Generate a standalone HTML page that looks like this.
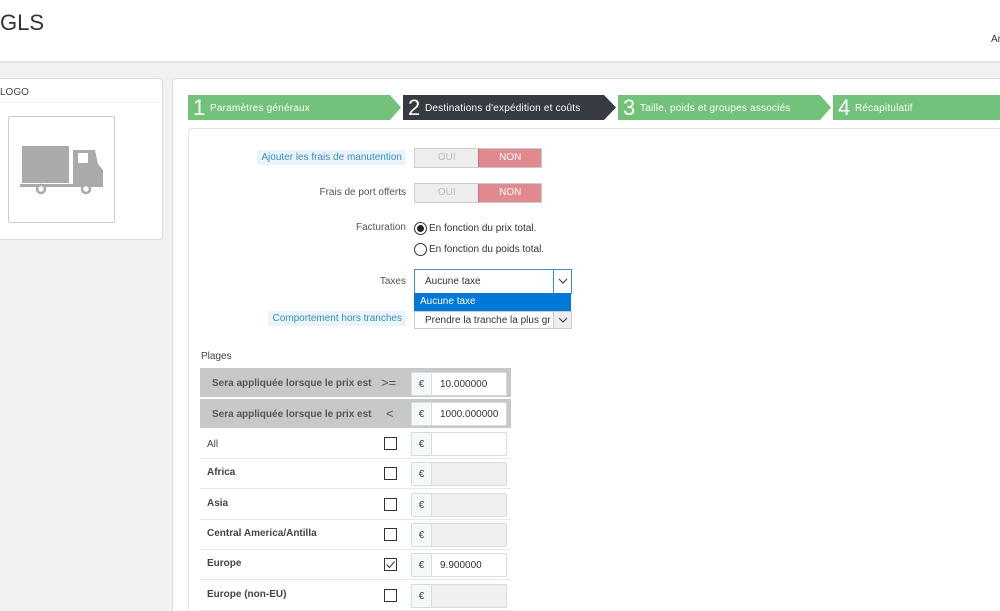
<!DOCTYPE html>
<html><head><meta charset="utf-8"><style>
*{box-sizing:border-box;margin:0;padding:0}
html,body{width:1000px;height:611px;overflow:hidden}
body{background:#eff1f2;font-family:"Liberation Sans",sans-serif;font-size:10px;color:#555;position:relative}
.a{position:absolute}
.hdr{left:0;top:0;width:1000px;height:63px;background:#fff;border-bottom:2px solid #dfe2e4}
.panel{background:#fff;border:1px solid #dcdfe1;border-radius:4px}
.step{height:25px;color:#fff;font-size:10px;line-height:25px;white-space:nowrap}
.step b{font-weight:normal;font-size:22px;position:absolute;left:5px;top:0px;line-height:25px}
.step span{position:absolute;left:22px;top:1px;letter-spacing:0.2px}
.lbl{text-align:right;font-size:10px;color:#555;line-height:18px}
.hl{background:#eaf4fb;color:#3a8bbb;padding:2px 4px;border-radius:2px}
.sw{height:20px;width:128px;border:1px solid #ccc;display:flex;font-size:10px;line-height:18px;text-align:center}
.sw .o{width:64px;background:#eee;color:#bbb}
.sw .n{width:63px;background:#e08a8f;color:#fff;border-left:1px solid #c97378}
.radio{width:13px;height:13px;border:1px solid #333;border-radius:50%}
.sel{background:#fff;border:1px solid #ccc;font-size:10px;color:#333;line-height:24px;padding-left:10px}
.caret{position:absolute;right:0;top:0;width:18px;height:100%;border-left:1px solid #ccc}
.tr{left:200px;width:311px;height:30px;border-bottom:1px solid #e8e8e8;font-size:10px;color:#444;font-weight:bold}
.tr .n{position:absolute;left:7px;top:10px}
.cb{position:absolute;left:184px;top:8px;width:13px;height:13px;border:1px solid #333;background:#fff}
.ig{position:absolute;left:211px;top:3px;width:96px;height:24px;border:1px solid #d5dde0;border-radius:2px;display:flex;background:#f0f0f0}
.ig .e{width:20px;background:#f5f8f9;border-right:1px solid #d5dde0;text-align:center;line-height:24px;font-weight:normal;color:#444}
.ig .v{flex:1;padding-left:8px;line-height:24px;font-weight:normal;color:#333}
.gh{left:200px;width:311px;height:29px;background:#c8c8c8;font-weight:bold;color:#555;font-size:10px}
</style></head><body>
<div class="a hdr"></div>
<div class="a" style="left:0;top:10px;font-size:22px;color:#333">GLS</div>
<div class="a" style="left:991px;top:34px;font-size:10px;color:#333">An</div>

<div class="a panel" style="left:-5px;top:78px;width:168px;height:162px"></div>
<div class="a" style="left:0;top:87px;font-size:10px;color:#444">LOGO</div>
<div class="a" style="left:0;top:102px;width:160px;height:1px;background:#eee"></div>
<div class="a" style="left:8px;top:116px;width:107px;height:107px;border:1px solid #ccc;border-radius:2px;background:#fff">
<svg width="107" height="107" viewBox="0 0 107 107" style="position:absolute;left:-1px;top:-1px">
<rect x="14" y="30" width="47" height="37" fill="#aaa"/>
<path d="M65 34h22l3 14 5 6v14h-30z" fill="#aaa"/>
<rect x="70" y="37" width="10" height="10" rx="1" fill="#fff"/>
<rect x="12" y="68" width="83" height="3" fill="#aaa"/>
<circle cx="33" cy="73" r="4" fill="#fff" stroke="#aaa" stroke-width="2.5"/>
<circle cx="78" cy="73" r="4" fill="#fff" stroke="#aaa" stroke-width="2.5"/>
</svg></div>

<div class="a panel" style="left:172px;top:78px;width:840px;height:545px"></div>

<svg class="a" style="left:188px;top:95px" width="812" height="25">
<polygon points="0,0 202,0 213,12.5 202,25 0,25" fill="#72c279"/>
<polygon points="215,0 416,0 428,12.5 416,25 215,25" fill="#363a41"/>
<polygon points="430,0 632,0 643,12.5 632,25 430,25" fill="#72c279"/>
<polygon points="645,0 812,0 812,25 645,25" fill="#72c279"/>
</svg>
<div class="a step" style="left:188px;top:95px"><b>1</b><span>Paramètres généraux</span></div>
<div class="a step" style="left:403px;top:95px"><b>2</b><span>Destinations d'expédition et coûts</span></div>
<div class="a step" style="left:618px;top:95px"><b>3</b><span>Taille, poids et groupes associés</span></div>
<div class="a step" style="left:833px;top:95px"><b>4</b><span>Récapitulatif</span></div>

<div class="a" style="left:188px;top:128px;width:830px;height:500px;border:1px solid #e2e2e2;border-radius:4px;background:#fff"></div>

<div class="a lbl" style="left:200px;top:149px;width:206px"><span class="hl">Ajouter les frais de manutention</span></div>
<div class="a sw" style="left:414px;top:148px"><div class="o">OUI</div><div class="n">NON</div></div>
<div class="a lbl" style="left:200px;top:184px;width:206px">Frais de port offerts</div>
<div class="a sw" style="left:414px;top:183px"><div class="o">OUI</div><div class="n">NON</div></div>

<div class="a lbl" style="left:200px;top:219px;width:206px">Facturation</div>
<div class="a radio" style="left:414px;top:222px"><div style="margin:2px;width:7px;height:7px;border-radius:50%;background:#222"></div></div>
<div class="a" style="left:429px;top:223px;color:#333">En fonction du prix total.</div>
<div class="a radio" style="left:414px;top:243px"></div>
<div class="a" style="left:429px;top:244px;color:#333">En fonction du poids total.</div>

<div class="a lbl" style="left:200px;top:273px;width:206px">Taxes</div>
<div class="a sel" style="left:414px;top:269px;width:158px;height:25px;border-color:#3a8bd0">Aucune taxe<div class="caret" style="border-color:#3a8bd0"><svg width="18" height="22"><path d="M5 9l4 4 4-4" stroke="#333" fill="none"/></svg></div></div>
<div class="a" style="left:414px;top:293px;width:157px;height:18px;background:#0078d7;color:#fff;line-height:18px;padding-left:6px">Aucune taxe</div>
<div class="a lbl" style="left:200px;top:310px;width:206px"><span class="hl">Comportement hors tranches</span></div>
<div class="a sel" style="left:414px;top:311px;width:158px;height:18px;line-height:18px;overflow:hidden;white-space:nowrap">Prendre la tranche la plus gr<div class="caret" style="background:#eee"><svg width="18" height="16"><path d="M5 6l4 4 4-4" stroke="#333" fill="none"/></svg></div></div>

<div class="a" style="left:201px;top:351px;color:#444">Plages</div>
<div class="a gh" style="top:368px"><span class="a" style="left:12px;top:10px">Sera appliquée lorsque le prix est</span><span class="a" style="left:181px;top:7px;font-size:13px;font-weight:normal">&gt;=</span><div class="ig" style="top:4px;background:#fff"><div class="e">€</div><div class="v">10.000000</div></div></div>
<div class="a gh" style="top:399px"><span class="a" style="left:12px;top:10px">Sera appliquée lorsque le prix est</span><span class="a" style="left:186px;top:7px;font-size:13px;font-weight:normal">&lt;</span><div class="ig" style="top:3px;background:#fff"><div class="e">€</div><div class="v">1000.000000</div></div></div>

<div class="a tr" style="top:429px"><span class="n" style="font-weight:normal">All</span><div class="cb"></div><div class="ig" style="background:#fff"><div class="e">€</div><div class="v"></div></div></div>
<div class="a tr" style="top:459px"><span class="n" style="top:8px">Africa</span><div class="cb"></div><div class="ig"><div class="e">€</div><div class="v"></div></div></div>
<div class="a tr" style="top:490px"><span class="n" style="top:8px">Asia</span><div class="cb"></div><div class="ig"><div class="e">€</div><div class="v"></div></div></div>
<div class="a tr" style="top:520px"><span class="n" style="top:8px">Central America/Antilla</span><div class="cb"></div><div class="ig"><div class="e">€</div><div class="v"></div></div></div>
<div class="a tr" style="top:550px"><span class="n" style="top:8px">Europe</span><div class="cb"><svg width="11" height="11" style="position:absolute;left:0;top:0"><path d="M1.5 5.5l3 3 5-6" stroke="#333" fill="none"/></svg></div><div class="ig" style="background:#fff"><div class="e">€</div><div class="v">9.900000</div></div></div>
<div class="a tr" style="top:581px"><span class="n" style="top:8px">Europe (non-EU)</span><div class="cb"></div><div class="ig"><div class="e">€</div><div class="v"></div></div></div>
</body></html>
